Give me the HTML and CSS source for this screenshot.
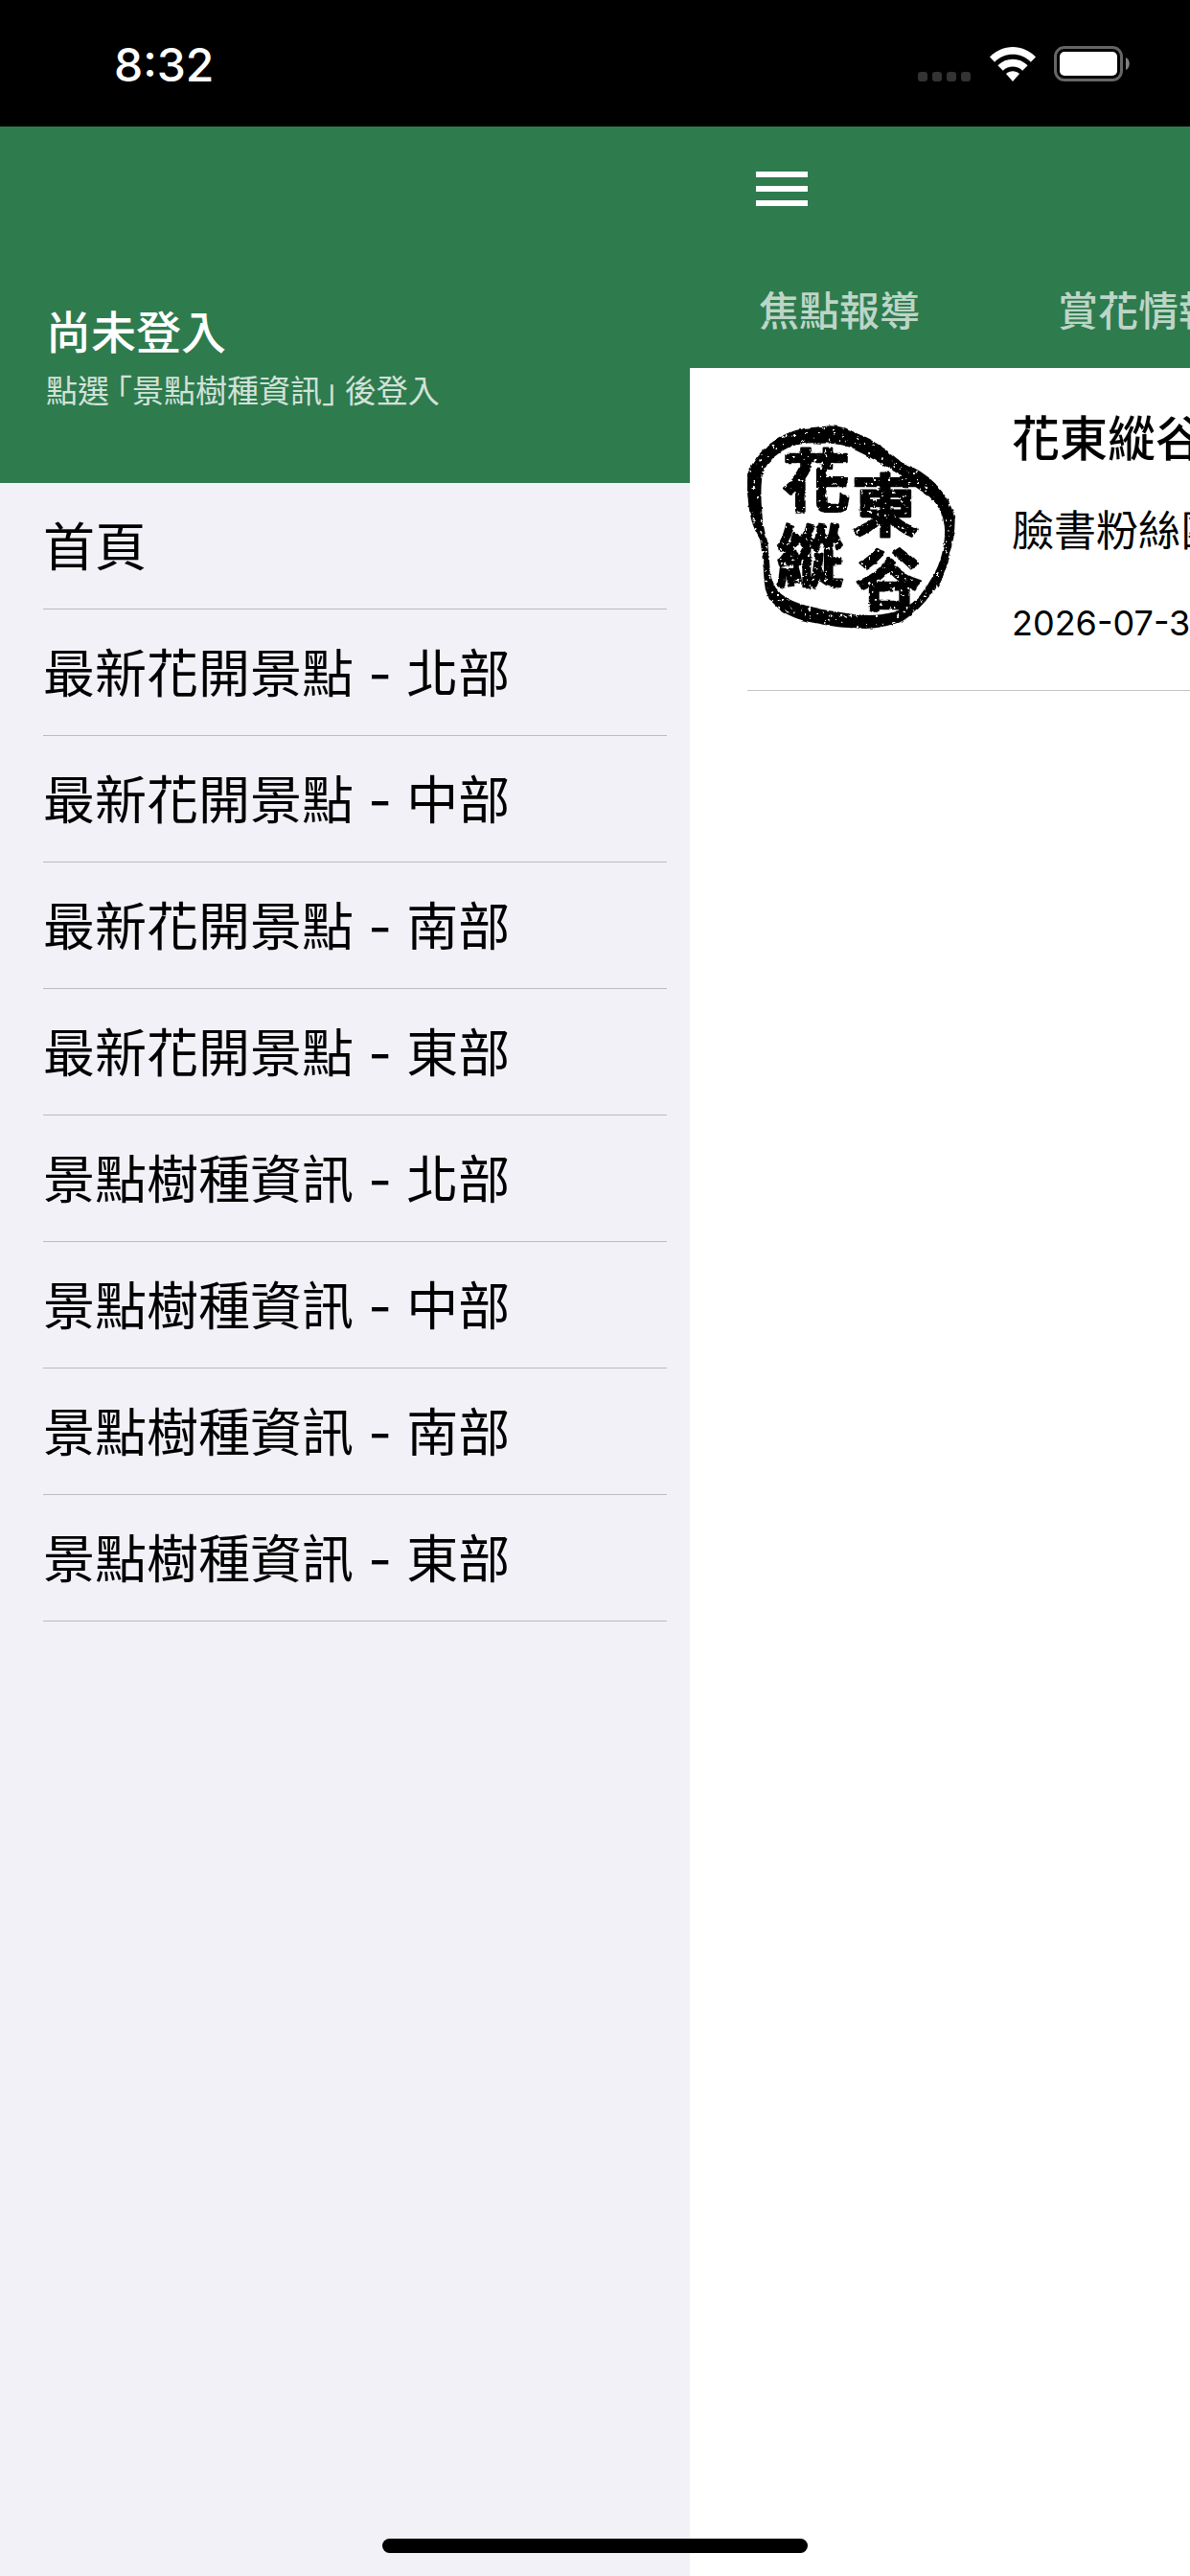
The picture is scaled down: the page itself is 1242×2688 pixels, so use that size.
FILE: index.html
```html
<!DOCTYPE html>
<html lang="zh-Hant">
<head>
  <meta charset="UTF-8" />
  <meta name="viewport" content="width=device-width, initial-scale=1" />
  <title>賞花情報</title>
  <link rel="stylesheet" href="styles.css">
</head>
<body>
  <div class="status-bar">
    <span class="time">8:32</span>
    <div class="status-icons">
      <svg class="signal" width="55" height="10" viewBox="0 0 55 10" fill="#333">
        <rect width="10" height="10" rx="3" />
        <rect x="15" width="10" height="10" rx="3" />
        <rect x="30" width="10" height="10" rx="3" />
        <rect x="45" width="10" height="10" rx="3" />
      </svg>
      <svg class="wifi" width="48" height="36" viewBox="0 0 48 36" fill="#fff">
        <path d="M0 10.6C13-3.5 35-3.5 48 10.6L42.8 15.8C32.5 5.2 15.5 5.2 5.2 15.8Z" />
        <path d="M8.4 19.2C17 10.6 31 10.6 39.6 19.2L34.2 24.8C28.5 19.2 19.5 19.2 13.8 24.8Z" />
        <path d="M17 28C21 24.4 27 24.4 31 28L24 36Z" />
      </svg>
      <svg class="battery" width="79" height="37" viewBox="0 0 79 37">
        <rect x="1.5" y="1.5" width="69" height="34" rx="9.5" fill="none" stroke="#666" stroke-width="3" />
        <rect x="6" y="6" width="60" height="25" rx="5" fill="#fff" />
        <path d="M75 12C80 14 80 23 75 25Z" fill="#808080" />
      </svg>
    </div>
  </div>

  <div class="app">
    <aside class="drawer">
      <div class="account">
        <h2>尚未登入</h2>
        <p>點選 「景點樹種資訊」 後登入</p>
      </div>
      <nav>
        <ul class="menu">
          <li><a href="#">首頁</a></li>
          <li><a href="#">最新花開景點 - 北部</a></li>
          <li><a href="#">最新花開景點 - 中部</a></li>
          <li><a href="#">最新花開景點 - 南部</a></li>
          <li><a href="#">最新花開景點 - 東部</a></li>
          <li><a href="#">景點樹種資訊 - 北部</a></li>
          <li><a href="#">景點樹種資訊 - 中部</a></li>
          <li><a href="#">景點樹種資訊 - 南部</a></li>
          <li><a href="#">景點樹種資訊 - 東部</a></li>
        </ul>
      </nav>
    </aside>

    <main class="content">
      <header class="toolbar">
        <button class="menu-btn" type="button" aria-label="選單">
          <svg width="54" height="36" viewBox="0 0 54 36" fill="#fff">
            <rect width="54" height="6" />
            <rect y="15" width="54" height="6" />
            <rect y="30" width="54" height="6" />
          </svg>
        </button>
        <nav class="tabs">
          <a href="#">焦點報導</a>
          <a href="#">賞花情報</a>
        </nav>
      </header>

      <a class="news-item" href="#">
        <svg class="stamp" width="218" height="218" viewBox="60 63 654 654">
          <defs>
            <!-- worn ink: rough edges, then small holes -->
            <filter id="ink" x="-5%" y="-5%" width="110%" height="110%">
              <feTurbulence type="fractalNoise" baseFrequency="0.04" numOctaves="3" seed="4" result="wave" />
              <feDisplacementMap in="SourceGraphic" in2="wave" scale="9" xChannelSelector="R" yChannelSelector="G" result="rough" />
              <feTurbulence type="fractalNoise" baseFrequency="0.08" numOctaves="3" seed="9" />
              <feColorMatrix type="matrix" values="0 0 0 0 0  0 0 0 0 0  0 0 0 0 0  0 0 0 14 -9.4" result="holes" />
              <feComposite in="rough" in2="holes" operator="out" />
            </filter>
          </defs>
          <g filter="url(#ink)">
            <path fill-rule="evenodd" d="M320 73Q365 74 400 95Q450 115 490 145L545 188Q610 212 650 255Q700 310 710 365Q710 430 690 480Q680 555 635 600Q600 650 545 685Q490 706 430 708Q340 706 270 690Q190 675 155 642Q115 610 113 560Q108 480 100 430Q70 380 65 330Q56 270 62 220Q85 165 130 130Q180 90 240 80ZM290 128Q240 122 190 140Q135 165 110 215Q100 250 105 330Q108 390 122 430Q128 470 131 530Q140 585 180 610Q230 640 340 655Q430 672 490 662Q560 650 600 605Q650 540 665 490Q682 430 677 385Q670 330 630 295Q590 268 530 222Q460 178 400 150Q350 124 290 128Z" />
            <g class="stamp-text">
              <text x="170" y="324" font-size="212">花</text>
              <text x="386" y="402" font-size="212">東</text>
              <text x="150" y="560" font-size="212">縱</text>
              <text x="400" y="632" font-size="208">谷</text>
            </g>
          </g>
        </svg>
        <div class="news-text">
          <h3>花東縱谷國家風景區</h3>
          <p>臉書粉絲團</p>
          <time>2026-07-31</time>
        </div>
      </a>
    </main>
  </div>

  <div class="home-indicator"></div>
</body>
</html>
```
FILE: styles.css
```css
* {
  box-sizing: border-box;
}
body {
  margin: 0;
  min-height: 100vh;
  display: flex;
  flex-direction: column;
  font-family: Inter, "Noto Sans CJK TC", sans-serif;
  color: #000;
  background-color: #fff;
  overflow-x: hidden;
}
h2, h3, p, ul {
  margin: 0;
  padding: 0;
}
a {
  color: inherit;
  text-decoration: none;
}
svg {
  display: block;
  flex-shrink: 0;
}

/* status bar */
.status-bar {
  display: flex;
  justify-content: space-between;
  height: 132px;
  padding: 0 63px 0 119px;
  background-color: #000;
  color: #fff;
}
.time {
  font-size: 48px;
  font-weight: 500;
  line-height: 136px;
}
.status-icons {
  display: flex;
  align-items: flex-end;
  padding-bottom: 47px;
}
.wifi {
  margin: 0 19px 0 20px;
}

/* layout */
.app {
  flex: 1;
  display: flex;
}
.drawer {
  flex: 0 0 720px;
  background-color: #f2f1f7;
}
.content {
  flex: 1;
  min-width: 0;
  overflow: hidden;
  white-space: nowrap;
}

/* drawer */
.account {
  display: flex;
  flex-direction: column;
  justify-content: flex-end;
  height: 372px;
  padding: 0 48px 73px;
  background-color: #2e7b4e;
  color: #fff;
}
.account h2 {
  font-size: 47px;
  font-weight: 500;
  line-height: 68px;
}
.account p {
  font-family: "Noto Sans CJK TC", sans-serif;
  font-size: 33px;
  line-height: 50px;
  color: rgba(255, 255, 255, 0.8);
  font-feature-settings: "halt";
}
.menu {
  padding: 0 24px 0 45px;
  list-style: none;
}
.menu li {
  border-bottom: 1px solid #bcbbc1;
}
.menu a {
  display: block;
  padding-top: 5px;
  font-size: 54px;
  line-height: 126px;
}

/* main panel */
.toolbar {
  height: 252px;
  padding: 32px 0 0 54px;
  background-color: #2e7b4e;
}
.menu-btn {
  display: block;
  padding: 15px;
  border: 0;
  background: none;
  cursor: pointer;
}
.tabs {
  display: flex;
  gap: 144px;
  padding: 65px 0 0 18px;
  font-size: 42px;
  font-weight: 500;
  line-height: 60px;
  color: rgba(255, 255, 255, 0.7);
}
.news-item {
  display: flex;
  gap: 58px;
  margin-left: 60px;
  padding: 38px 0 34px;
  border-bottom: 1px solid #c6c6c8;
}
.stamp {
  margin-top: 19px;
}
.stamp-text {
  font-family: "Noto Sans CJK TC", sans-serif;
  font-weight: 700;
  stroke: #000;
  stroke-width: 7px;
  stroke-linejoin: round;
}
.news-text {
  display: flex;
  flex-direction: column;
  gap: 24px;
}
.news-text h3 {
  font-size: 50px;
  font-weight: 500;
  line-height: 72px;
}
.news-text p {
  font-size: 44px;
  line-height: 72px;
}
.news-text time {
  font-size: 36px;
  line-height: 72px;
}

/* bar at the bottom edge of the screen */
.home-indicator {
  position: fixed;
  bottom: 24px;
  left: 50%;
  width: 444px;
  height: 15px;
  margin-left: -222px;
  border-radius: 8px;
  background-color: #000;
}
```
